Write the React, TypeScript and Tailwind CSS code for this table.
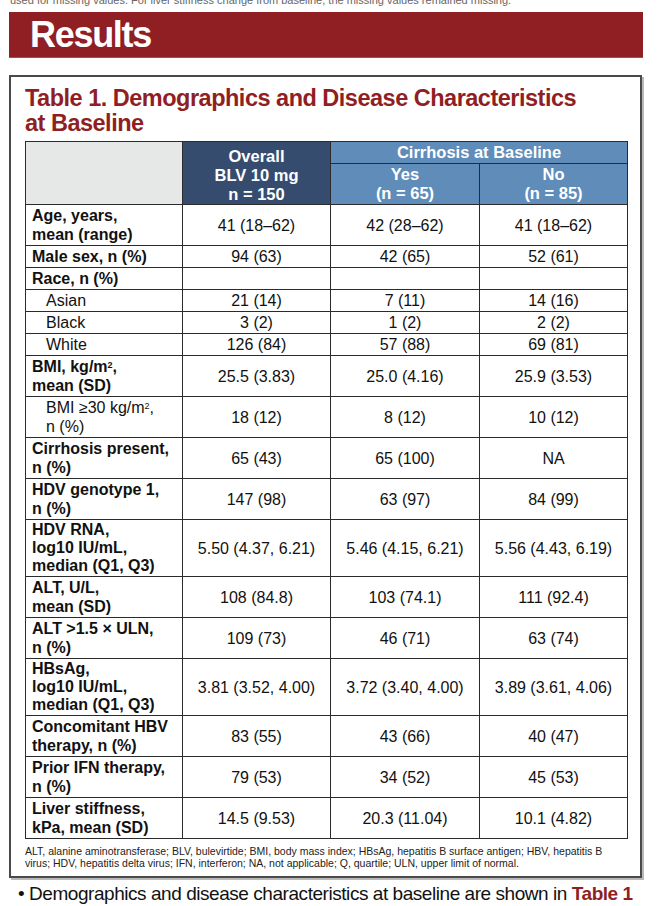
import React from "react";

type Row = {
  label: React.ReactNode;
  values: string[];
  sub?: boolean;
  tall?: boolean;
};

const rows: Row[] = [
  { label: <>Age, years,<br />mean (range)</>, values: ["41 (18–62)", "42 (28–62)", "41 (18–62)"] },
  { label: "Male sex, n (%)", values: ["94 (63)", "42 (65)", "52 (61)"] },
  { label: "Race, n (%)", values: ["", "", ""] },
  { label: "Asian", values: ["21 (14)", "7 (11)", "14 (16)"], sub: true },
  { label: "Black", values: ["3 (2)", "1 (2)", "2 (2)"], sub: true },
  { label: "White", values: ["126 (84)", "57 (88)", "69 (81)"], sub: true },
  {
    label: <>BMI, kg/m<sup className="text-[9px]">2</sup>,<br />mean (SD)</>,
    values: ["25.5 (3.83)", "25.0 (4.16)", "25.9 (3.53)"],
  },
  {
    label: <>BMI ≥30 kg/m<sup className="text-[9px]">2</sup>,<br />n (%)</>,
    values: ["18 (12)", "8 (12)", "10 (12)"],
    sub: true,
  },
  { label: <>Cirrhosis present,<br />n (%)</>, values: ["65 (43)", "65 (100)", "NA"] },
  { label: <>HDV genotype 1,<br />n (%)</>, values: ["147 (98)", "63 (97)", "84 (99)"] },
  {
    label: <>HDV RNA,<br />log10 IU/mL,<br />median (Q1, Q3)</>,
    values: ["5.50 (4.37, 6.21)", "5.46 (4.15, 6.21)", "5.56 (4.43, 6.19)"],
    tall: true,
  },
  { label: <>ALT, U/L,<br />mean (SD)</>, values: ["108 (84.8)", "103 (74.1)", "111 (92.4)"] },
  { label: <>ALT &gt;1.5 × ULN,<br />n (%)</>, values: ["109 (73)", "46 (71)", "63 (74)"] },
  {
    label: <>HBsAg,<br />log10 IU/mL,<br />median (Q1, Q3)</>,
    values: ["3.81 (3.52, 4.00)", "3.72 (3.40, 4.00)", "3.89 (3.61, 4.06)"],
    tall: true,
  },
  { label: <>Concomitant HBV<br />therapy, n (%)</>, values: ["83 (55)", "43 (66)", "40 (47)"] },
  { label: <>Prior IFN therapy,<br />n (%)</>, values: ["79 (53)", "34 (52)", "45 (53)"] },
  { label: <>Liver stiffness,<br />kPa, mean (SD)</>, values: ["14.5 (9.53)", "20.3 (11.04)", "10.1 (4.82)"] },
];

const cell = "border border-[#2b2b2b]";
const head = "border border-[#2b2b2b] text-white font-bold text-[16.5px] leading-[19px]";

const App = () => {
  return (
    <div className="w-[667px] h-[906px] bg-white overflow-hidden font-['Liberation_Sans',Arial,sans-serif] text-[#111]">
      {/* tail of the previous section, cut by the screenshot */}
      <div className="h-[6px] overflow-hidden pl-[10px]">
        <p className="-mt-[6px] text-[11px] leading-[12px] text-[#666] whitespace-nowrap">
          used for missing values. For liver stiffness change from baseline, the missing values remained missing.
        </p>
      </div>

      <div className="mt-[6px] mx-[9px] w-[634px] h-[46px] bg-[#8f1f23] border-b border-[#b44a4d] flex items-center pl-[21px]">
        <h1 className="text-white font-bold text-[36px] tracking-[-1.3px] leading-none">Results</h1>
      </div>

      <div className="mt-[17px] ml-[9px] w-[633px] h-[803px] border-2 border-[#4a4a4a] shadow-[2px_2px_0_#b9b9b9] px-[14px] pt-[9px]">
        <h2 className="text-[#8f1f23] font-bold text-[23.5px] leading-[25px] tracking-[-0.5px]">
          Table 1. Demographics and Disease Characteristics
          <br />
          at Baseline
        </h2>

        <table className="mt-[5px] w-[602px] border-collapse table-fixed">
          <colgroup>
            <col className="w-[157px]" />
            <col className="w-[148px]" />
            <col className="w-[149px]" />
            <col className="w-[148px]" />
          </colgroup>
          <thead>
            <tr className="h-[22px]">
              <th rowSpan={2} className={`${cell} bg-[#e5e8e6]`}></th>
              <th rowSpan={2} className={`${head} bg-[#354c6f] align-top pt-[5px]`}>
                Overall
                <br />
                BLV 10 mg
                <br />n = 150
              </th>
              <th colSpan={2} className={`${head} bg-[#608cba]`}>
                Cirrhosis at Baseline
              </th>
            </tr>
            <tr className="h-[40px]">
              <th className={`${head} bg-[#608cba]`}>
                Yes
                <br />
                (n = 65)
              </th>
              <th className={`${head} bg-[#608cba]`}>
                No
                <br />
                (n = 85)
              </th>
            </tr>
          </thead>
          <tbody>
            {rows.map((r, i) => (
              <tr key={i}>
                <td
                  className={`${cell} py-[1px] text-[16px] ${r.tall ? "leading-[18px]" : "leading-[19px]"} ${
                    r.sub ? "pl-[20px] font-normal" : "pl-[6px] font-bold"
                  }`}
                >
                  {r.label}
                </td>
                {r.values.map((v, j) => (
                  <td key={j} className={`${cell} text-center text-[16px] leading-[19px]`}>
                    {v}
                  </td>
                ))}
              </tr>
            ))}
          </tbody>
        </table>

        <p className="mt-[6px] text-[10.5px] leading-[12px] text-[#222]">
          ALT, alanine aminotransferase; BLV, bulevirtide; BMI, body mass index; HBsAg, hepatitis B surface antigen; HBV, hepatitis B
          <br />
          virus; HDV, hepatitis delta virus; IFN, interferon; NA, not applicable; Q, quartile; ULN, upper limit of normal.
        </p>
      </div>

      <p className="mt-[5px] pl-[18px] text-[19px] leading-[22px] tracking-[-0.45px] whitespace-nowrap">
        • Demographics and disease characteristics at baseline are shown in{" "}
        <span className="text-[#8f1f23] font-bold">Table 1</span>
      </p>
    </div>
  );
};

export default App;
